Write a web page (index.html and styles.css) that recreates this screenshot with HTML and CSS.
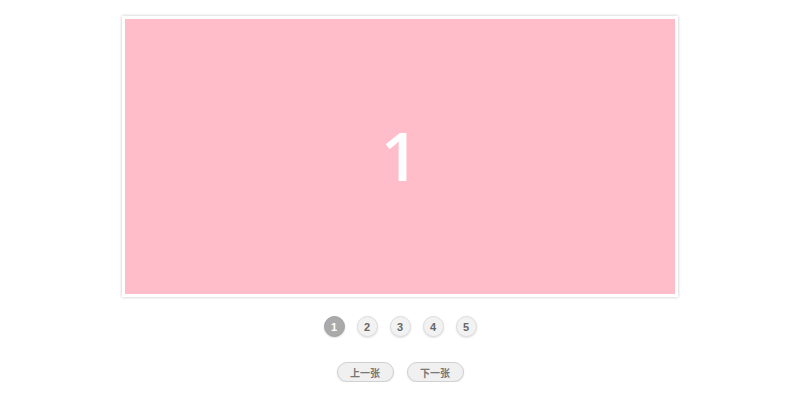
FILE: index.html
```html
<!DOCTYPE html>
<html>
<head>
<meta charset="utf-8">
<link rel="stylesheet" href="styles.css">
</head>
<body>
<div class="page">
  <div class="frame">
    <div class="slide">1</div>
  </div>
  <div class="dots">
    <span class="dot active">1</span>
    <span class="dot">2</span>
    <span class="dot">3</span>
    <span class="dot">4</span>
    <span class="dot">5</span>
  </div>
  <div class="controls">
    <button class="btn">上一张</button>
    <button class="btn">下一张</button>
  </div>
</div>
</body>
</html>
```
FILE: styles.css
```css
html, body {
  margin: 0;
  padding: 0;
  background: #fff;
}
.page {
  display: flex;
  flex-direction: column;
  align-items: center;
  padding-top: 16px;
  font-family: "Liberation Sans", "Noto Sans CJK SC", sans-serif;
}
.frame {
  width: 550px;
  height: 275px;
  border: 3px solid #fff;
  box-shadow: 0 0 3px rgba(0,0,0,0.25);
}
.slide {
  width: 100%;
  height: 100%;
  background: #ffbdc9;
  color: #fff;
  display: flex;
  align-items: center;
  justify-content: center;
  font-family: "Open Sans", sans-serif;
  font-size: 67px;
  font-weight: 600;
  line-height: 1;
  padding-bottom: 2px;
  box-sizing: border-box;
}
.dots {
  display: flex;
  gap: 12px;
  margin-top: 19px;
}
.dot {
  width: 19px;
  height: 19px;
  border-radius: 50%;
  border: 1px solid #ddd;
  background: #f2f2f2;
  color: #666;
  font-size: 11px;
  font-weight: bold;
  display: flex;
  align-items: center;
  justify-content: center;
  box-shadow: 0 1px 2px rgba(0,0,0,0.12);
}
.dot.active {
  background: #aaa;
  border-color: #a0a0a0;
  color: #fff;
}
.controls {
  display: flex;
  gap: 13px;
  margin-top: 25px;
}
.btn {
  width: 57px;
  height: 20px;
  border: 1px solid #d0d0d0;
  border-radius: 10px;
  background: #f0f0f0;
  color: #777;
  font-family: "Noto Sans CJK SC", sans-serif;
  font-size: 10px;
  font-weight: bold;
  padding: 0;
  box-shadow: 0 1px 2px rgba(0,0,0,0.1);
}
```
